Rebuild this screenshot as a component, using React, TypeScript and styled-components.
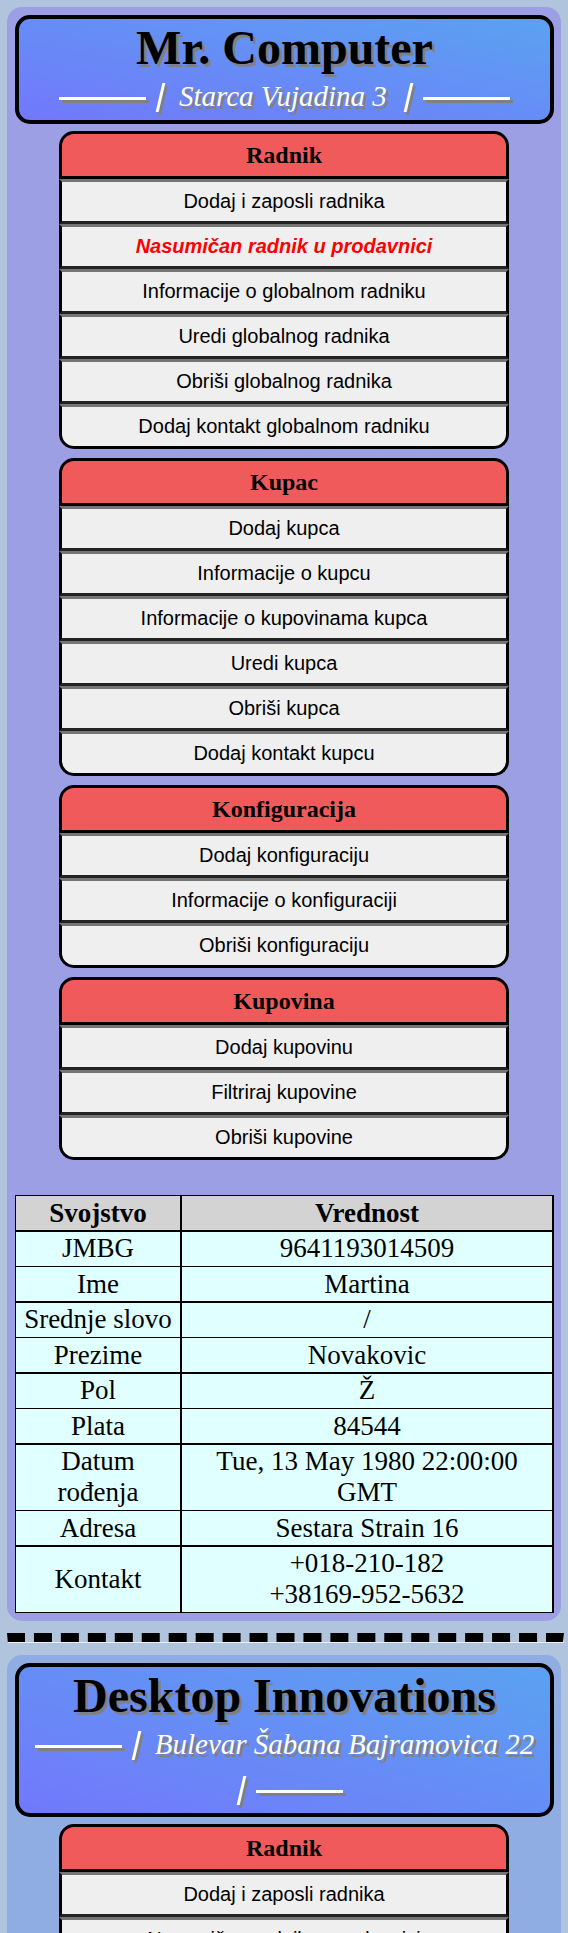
import React from "react";
import styled, { createGlobalStyle } from "styled-components";

const GlobalStyle = createGlobalStyle`
  *, *::before, *::after { box-sizing: border-box; }
  body {
    margin: 0;
    background: #b0c4de;
    color: #000;
    font-family: "Liberation Serif", "Times New Roman", serif;
  }
`;

const Page = styled.main`
  padding: 7px;
`;

const Store = styled.section<{ $tint: string }>`
  padding: 8px 7px 8px 8px;
  border-radius: 15px;
  background: ${(p) => p.$tint};
`;

const Banner = styled.header`
  padding: 1px 8px;
  border: 4px solid #000;
  border-radius: 15px;
  background: linear-gradient(to top right, #7278fb, #5aa2f1);
  text-align: center;
`;

const StoreName = styled.h1`
  margin: 0 0 -2px;
  font-size: 48px;
  line-height: 56px;
  text-shadow: 3px 3px #808080;
`;

const Address = styled.p`
  margin: 0;
  color: #fff;
  font-size: 29px;
  font-style: italic;
  line-height: 45px;
  text-shadow: 3px 3px #808080;
`;

const Ornament = styled.span`
  white-space: nowrap;
`;

const Rule = styled.span`
  display: inline-block;
  width: 87px;
  height: 3px;
  background: #fff;
  box-shadow: 3px 3px #808080;
  vertical-align: 6px;
`;

const Bar = styled.span`
  display: inline-block;
  width: 3px;
  height: 29px;
  margin: 0 13px;
  background: #fff;
  box-shadow: 3px 3px #808080;
  transform: skewX(-13deg);
  vertical-align: -6px;

  &:last-child { margin-right: 17px; }
`;

const Menus = styled.nav`
  display: flex;
  flex-direction: column;
  gap: 9px;
  margin: 7px 45px 0 44px;
`;

const Menu = styled.div`
  display: flex;
  flex-direction: column;
`;

const MenuTitle = styled.h2`
  margin: 0;
  border: 3px solid #000;
  border-radius: 15px 15px 0 0;
  background: #f05a5b;
  font-size: 24px;
  line-height: 42px;
  text-align: center;
`;

const MenuButton = styled.button<{ $active?: boolean }>`
  height: 45px;
  padding: 0;
  border: 3px solid #000;
  border-top-color: #767474;
  border-bottom-color: #222;
  background: #efefef;
  color: ${(p) => (p.$active ? "#f00" : "#000")};
  font-family: "Liberation Sans", Arial, sans-serif;
  font-size: 20px;
  font-style: ${(p) => (p.$active ? "italic" : "normal")};
  font-weight: ${(p) => (p.$active ? 700 : 400)};

  &:last-child {
    border-bottom-color: #000;
    border-radius: 0 0 15px 15px;
  }
`;

const Details = styled.table`
  width: 100%;
  margin-top: 35px;
  border-top: 1px solid #000;
  border-left: 1px solid #000;
  border-spacing: 0;
  table-layout: fixed;
  background: #e0ffff;
  font-size: 27px;
  line-height: 31px;
  text-align: center;

  th, td {
    padding: 2px 8px 1px;
    border-right: 2px solid #000;
    border-bottom: 1px solid #000;
  }
  thead th, tbody tr:nth-child(even) > * { border-bottom-width: 2px; }
  tbody tr:nth-child(odd) > * { padding: 1px 8px 2px; }
  thead th { background: #d3d3d3; }
  tbody th { font-weight: 400; }
  th:first-child { width: 166px; }
`;

const Line = styled.div``;

const Divider = styled.hr`
  margin: 12px -3px 12px 0;
  border: 1px inset #eee;
  border-top: 9px dashed #000;
`;

interface MenuData {
  title: string;
  items: string[];
}

const menus: MenuData[] = [
  {
    title: "Radnik",
    items: [
      "Dodaj i zaposli radnika",
      "Nasumičan radnik u prodavnici",
      "Informacije o globalnom radniku",
      "Uredi globalnog radnika",
      "Obriši globalnog radnika",
      "Dodaj kontakt globalnom radniku",
    ],
  },
  {
    title: "Kupac",
    items: [
      "Dodaj kupca",
      "Informacije o kupcu",
      "Informacije o kupovinama kupca",
      "Uredi kupca",
      "Obriši kupca",
      "Dodaj kontakt kupcu",
    ],
  },
  {
    title: "Konfiguracija",
    items: ["Dodaj konfiguraciju", "Informacije o konfiguraciji", "Obriši konfiguraciju"],
  },
  {
    title: "Kupovina",
    items: ["Dodaj kupovinu", "Filtriraj kupovine", "Obriši kupovine"],
  },
];

const details: [string, string[]][] = [
  ["JMBG", ["9641193014509"]],
  ["Ime", ["Martina"]],
  ["Srednje slovo", ["/"]],
  ["Prezime", ["Novakovic"]],
  ["Pol", ["Ž"]],
  ["Plata", ["84544"]],
  ["Datum rođenja", ["Tue, 13 May 1980 22:00:00 GMT"]],
  ["Adresa", ["Sestara Strain 16"]],
  ["Kontakt", ["+018-210-182", "+38169-952-5632"]],
];

function StoreHeader({ name, address }: { name: string; address: string }) {
  return (
    <Banner>
      <StoreName>{name}</StoreName>
      <Address>
        <Ornament aria-hidden="true">
          <Rule />
          <Bar />
        </Ornament>
        {address}{" "}
        <Ornament aria-hidden="true">
          <Bar />
          <Rule />
        </Ornament>
      </Address>
    </Banner>
  );
}

function StoreMenus({ data, active }: { data: MenuData[]; active?: string }) {
  return (
    <Menus>
      {data.map((menu) => (
        <Menu key={menu.title}>
          <MenuTitle>{menu.title}</MenuTitle>
          {menu.items.map((item) => (
            <MenuButton key={item} type="button" $active={item === active}>
              {item}
            </MenuButton>
          ))}
        </Menu>
      ))}
    </Menus>
  );
}

export default function App() {
  return (
    <>
      <GlobalStyle />
      <Page>
        <Store $tint="#9d9fe4">
          <StoreHeader name="Mr. Computer" address="Starca Vujadina 3" />
          <StoreMenus data={menus} active="Nasumičan radnik u prodavnici" />
          <Details>
            <thead>
              <tr>
                <th scope="col">Svojstvo</th>
                <th scope="col">Vrednost</th>
              </tr>
            </thead>
            <tbody>
              {details.map(([label, lines]) => (
                <tr key={label}>
                  <th scope="row">{label}</th>
                  <td>
                    {lines.map((line) => (
                      <Line key={line}>{line}</Line>
                    ))}
                  </td>
                </tr>
              ))}
            </tbody>
          </Details>
        </Store>
        <Divider />
        <Store $tint="#90ade3">
          <StoreHeader name="Desktop Innovations" address="Bulevar Šabana Bajramovica 22" />
          <StoreMenus data={menus.slice(0, 1)} />
        </Store>
      </Page>
    </>
  );
}
